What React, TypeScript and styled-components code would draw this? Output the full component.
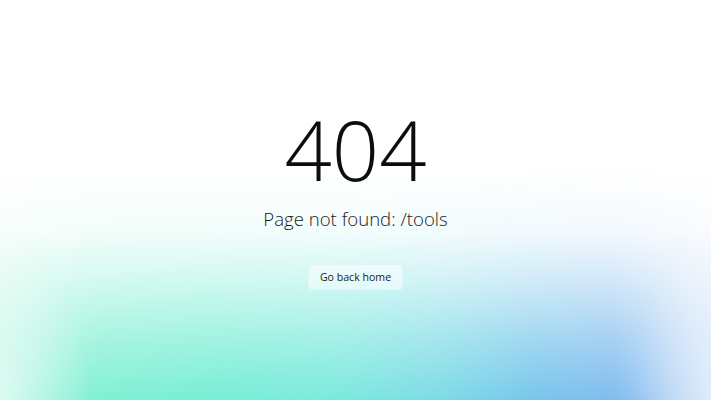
import React from "react";
import styled, { createGlobalStyle } from "styled-components";

const GlobalStyle = createGlobalStyle`
  html, body {
    margin: 0;
    padding: 0;
    height: 100%;
  }
  body {
    font-family: "Open Sans", "Noto Sans", sans-serif;
    color: #111;
  }
  #root {
    height: 100%;
  }
`;

const Page = styled.main`
  min-height: 100vh;
  box-sizing: border-box;
  padding-bottom: 3px;
  display: flex;
  flex-direction: column;
  align-items: center;
  justify-content: center;
  background-color: #ffffff;
  background-image:
    radial-gradient(ellipse 90px 160px at 0px 400px, rgba(255, 255, 255, 0.55), rgba(255, 255, 255, 0) 100%),
    radial-gradient(ellipse 80px 180px at 711px 400px, rgba(255, 255, 255, 0.45), rgba(255, 255, 255, 0) 100%),
    linear-gradient(
      to bottom,
      #ffffff 0%,
      #ffffff 42%,
      rgba(255, 255, 255, 0.9) 58%,
      rgba(255, 255, 255, 0.65) 70%,
      rgba(255, 255, 255, 0.3) 85%,
      rgba(255, 255, 255, 0) 100%
    ),
    linear-gradient(
      90deg,
      #aef4e0 0%,
      #80f0d3 14%,
      #78eed5 30%,
      #7ce9de 48%,
      #7ddbe6 62%,
      #78c5ec 76%,
      #80bcee 86%,
      #a8cdf3 94%,
      #c4dbf7 100%
    );
`;

const Code = styled.h1`
  margin: 0;
  font-size: 83px;
  line-height: 83px;
  font-weight: 300;
  letter-spacing: 0;
  color: #0d0d0d;
`;

const Message = styled.p`
  margin: 18px 0 0;
  font-size: 18.6px;
  line-height: 22px;
  font-weight: 300;
  color: #1a1a1a;
`;

const HomeButton = styled.a`
  margin-top: 34px;
  display: inline-flex;
  align-items: center;
  justify-content: center;
  height: 26px;
  padding: 0 11px;
  border-radius: 4px;
  background: rgba(255, 255, 255, 0.5);
  border: 1px solid rgba(225, 240, 244, 0.8);
  box-sizing: border-box;
  font-size: 10.6px;
  color: #1a1a1a;
  text-decoration: none;
  cursor: pointer;
`;

export default function App() {
  return (
    <>
      <GlobalStyle />
      <Page>
        <Code>404</Code>
        <Message>Page not found: /tools</Message>
        <HomeButton href="#">Go back home</HomeButton>
      </Page>
    </>
  );
}
